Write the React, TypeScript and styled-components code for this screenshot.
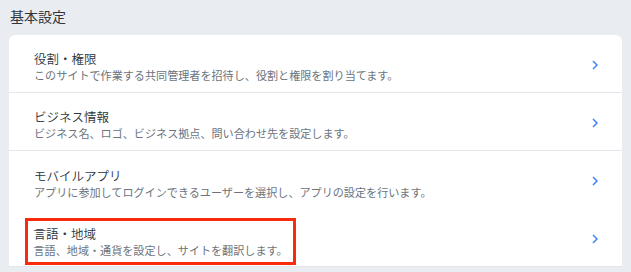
import styled, { createGlobalStyle } from 'styled-components'

interface SettingItem {
  title: string
  description: string
  highlighted?: boolean
  divider?: boolean
}

const items: SettingItem[] = [
  {
    title: '役割・権限',
    description: 'このサイトで作業する共同管理者を招待し、役割と権限を割り当てます。',
    divider: true,
  },
  {
    title: 'ビジネス情報',
    description: 'ビジネス名、ロゴ、ビジネス拠点、問い合わせ先を設定します。',
    divider: true,
  },
  {
    title: 'モバイルアプリ',
    description: 'アプリに参加してログインできるユーザーを選択し、アプリの設定を行います。',
  },
  {
    title: '言語・地域',
    description: '言語、地域・通貨を設定し、サイトを翻訳します。',
    highlighted: true,
    divider: true,
  },
]

const GlobalStyle = createGlobalStyle({
  'html, body': {
    margin: 0,
    padding: 0,
    background: '#e9ecf1',
    fontFamily: '"Noto Sans CJK JP", "Noto Sans", sans-serif',
  },
})

const Page = styled.div({
  width: 631,
  height: 272,
  overflow: 'hidden',
  padding: '0 9px',
  boxSizing: 'border-box',
})

const Heading = styled.h2({
  margin: 0,
  padding: '6px 0 0 1px',
  height: 29,
  fontSize: 14,
  fontWeight: 400,
  color: '#32363c',
  lineHeight: '20px',
})

const Card = styled.div({
  background: '#fff',
  borderRadius: '6px 6px 0 0',
})

const Row = styled.div<{ $divider?: boolean }>(props => ({
  display: 'flex',
  alignItems: 'center',
  height: 58,
  padding: '0 24px 0 25px',
  boxSizing: 'border-box',
  borderBottom: props.$divider ? '1px solid #e3e6ea' : 'none',
}))

const Text = styled.div<{ $highlighted?: boolean }>(props => ({
  flex: props.$highlighted ? '0 0 auto' : 1,
  marginTop: 6,
  ...(props.$highlighted
    ? {
        border: '3.5px solid #fa2a0c',
        padding: '4px 5px 4px 6px',
        margin: '8px 0 0 -9.5px',
      }
    : {}),
}))

const Spacer = styled.div({
  flex: 1,
})

const Title = styled.div({
  fontSize: 12.5,
  fontWeight: 350,
  lineHeight: '17px',
  color: '#2c3640',
})

const Description = styled.div({
  fontSize: 11.1,
  lineHeight: '16px',
  color: '#6c737c',
  whiteSpace: 'nowrap',
})

const Chevron = styled.svg({
  width: 6,
  height: 10,
  flexShrink: 0,
  marginTop: 2,
})

function App() {
  return (
    <>
      <GlobalStyle />
      <Page>
        <Heading>基本設定</Heading>
        <Card>
          {items.map(item => (
            <Row key={item.title} $divider={item.divider}>
              <Text $highlighted={item.highlighted}>
                <Title>{item.title}</Title>
                <Description>{item.description}</Description>
              </Text>
              {item.highlighted && <Spacer />}
              <Chevron viewBox="0 0 6 10">
                <path d="M1 1l4 4-4 4" fill="none" stroke="#3b82f6" strokeWidth="1.5" />
              </Chevron>
            </Row>
          ))}
        </Card>
      </Page>
    </>
  )
}

export default App
